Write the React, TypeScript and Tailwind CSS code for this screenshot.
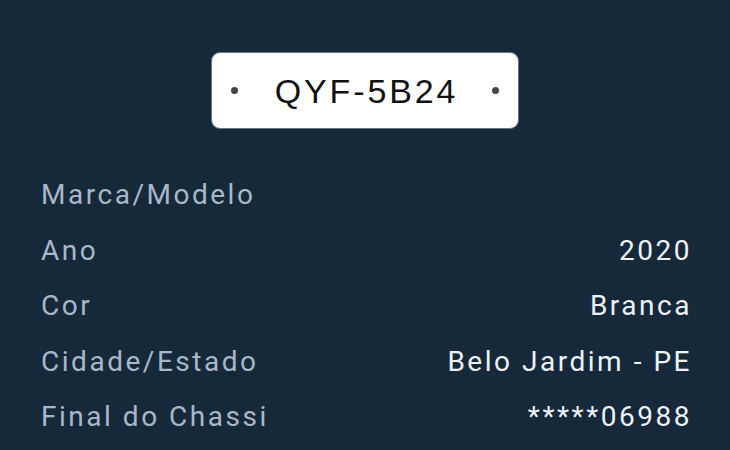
const rows = [
  { label: "Marca/Modelo", value: "" },
  { label: "Ano", value: "2020" },
  { label: "Cor", value: "Branca" },
  { label: "Cidade/Estado", value: "Belo Jardim - PE" },
  { label: "Final do Chassi", value: "*****06988" },
];

const Plate = ({ plate }: { plate: string }) => (
  <div className="flex h-[77px] w-[308px] items-center justify-between rounded-[9px] border-[1.5px] border-[#6b7480] bg-white px-[19px]">
    <span className="h-[7px] w-[7px] rounded-full bg-[#444]" />
    <span className="pl-[3px] font-['Liberation_Sans',Arial,sans-serif] text-[34px] leading-none tracking-[0.085em] text-[#111]">
      {plate}
    </span>
    <span className="h-[7px] w-[7px] rounded-full bg-[#444]" />
  </div>
);

export default function App() {
  return (
    <div className="h-[450px] w-[730px] overflow-hidden bg-[#15293b] font-['Roboto','Liberation_Sans',sans-serif]">
      <div className="flex justify-center pt-[52px]">
        <Plate plate="QYF-5B24" />
      </div>
      <div className="flex flex-col pl-[41px] pr-[38px] pt-[38px]">
        {rows.map((row) => (
          <div
            key={row.label}
            className="flex h-[55.5px] items-center justify-between text-[28px] leading-[55.5px] tracking-[0.09em]"
          >
            <span className="text-[#a9b7c8]">{row.label}</span>
            <span className="text-[#eef2f6]">{row.value}</span>
          </div>
        ))}
      </div>
    </div>
  );
}
